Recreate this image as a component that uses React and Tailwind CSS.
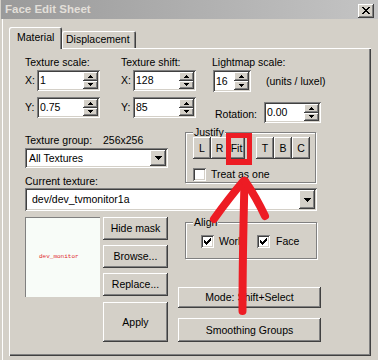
import React from "react";

const raised =
  "bg-[#d4d0c8] shadow-[inset_-1px_-1px_#404040,inset_1px_1px_#ffffff,inset_-2px_-2px_#808080]";
const sunken =
  "bg-white shadow-[inset_1px_1px_#808080,inset_-1px_-1px_#ffffff,inset_2px_2px_#404040,inset_-2px_-2px_#d4d0c8]";
const etched =
  "border border-[#808080] shadow-[inset_1px_1px_#ffffff,1px_1px_#ffffff]";

// tiny pixel triangles used on spin and combo buttons
function SpinArrow({ down }) {
  return (
    <svg width="5" height="3" viewBox="0 0 5 3" shapeRendering="crispEdges">
      {down ? (
        <path d="M0 0h5v1h-5z M1 1h3v1h-3z M2 2h1v1h-1z" fill="#000" />
      ) : (
        <path d="M2 0h1v1h-1z M1 1h3v1h-3z M0 2h5v1h-5z" fill="#000" />
      )}
    </svg>
  );
}

function ComboArrow() {
  return (
    <svg width="7" height="4" viewBox="0 0 7 4" shapeRendering="crispEdges">
      <path d="M0 0h7v1h-7z M1 1h5v1h-5z M2 2h3v1h-3z M3 3h1v1h-1z" fill="#000" />
    </svg>
  );
}

function Spin({ value, className }) {
  return (
    <div className={`flex p-[2px] ${sunken} ${className}`}>
      <div className="flex flex-1 items-center pl-[1px]">{value}</div>
      <div className="flex w-[15px] flex-col">
        <div className={`flex flex-1 items-center justify-center ${raised}`}>
          <SpinArrow />
        </div>
        <div className={`flex flex-1 items-center justify-center ${raised}`}>
          <SpinArrow down />
        </div>
      </div>
    </div>
  );
}

function Combo({ text, className, textClass = "pl-[2px]" }) {
  return (
    <div className={`flex p-[2px] ${sunken} ${className}`}>
      <div className={`flex flex-1 items-center ${textClass}`}>{text}</div>
      <div className={`flex w-[16px] items-center justify-center ${raised}`}>
        <ComboArrow />
      </div>
    </div>
  );
}

function Btn({ children, className }) {
  return (
    <div className={`flex items-center justify-center ${raised} ${className}`}>
      {children}
    </div>
  );
}

function Check({ checked }) {
  return (
    <div className={`flex h-[13px] w-[13px] shrink-0 items-center justify-center ${sunken}`}>
      {checked && (
        <svg width="7" height="7" viewBox="0 0 7 7" shapeRendering="crispEdges">
          <path
            d="M0 2h1v3h-1z M1 3h1v3h-1z M2 4h1v3h-1z M3 3h1v3h-1z M4 2h1v3h-1z M5 1h1v3h-1z M6 0h1v3h-1z"
            fill="#000"
          />
        </svg>
      )}
    </div>
  );
}

export default function App() {
  return (
    <div className="relative h-[360px] w-[378px] overflow-hidden bg-[#d4d0c8] font-['Liberation_Sans',Arial,sans-serif] text-[10.5px] leading-[13px] text-black">
      {/* Title bar */}
      <div className="ml-[1px] flex h-[19px] items-center justify-between bg-gradient-to-r from-[#9a9a9a] to-[#c4c4c4] pr-[4px]">
        <span className="pl-[4px] text-[11.5px] font-bold text-[#e2dfd9]">Face Edit Sheet</span>
        <div className={`mt-[2px] flex h-[14px] w-[16px] items-center justify-center ${raised}`}>
          <svg width="8" height="7" viewBox="0 0 8 7" shapeRendering="crispEdges">
            <path
              d="M0 0h2v1h-2z M6 0h2v1h-2z M1 1h2v1h-2z M5 1h2v1h-2z M2 2h4v1h-4z M3 3h2v1h-2z M2 4h4v1h-4z M1 5h2v1h-2z M5 5h2v1h-2z M0 6h2v1h-2z M6 6h2v1h-2z"
              fill="#000"
            />
          </svg>
        </div>
      </div>

      <div className="ml-[2px] h-[341px] border-l border-white pl-[6px] pt-[8px]">
        {/* Tabs */}
        <div className="flex h-[21px] items-end">
          <div className="relative z-10 mb-[-1px] h-[22px] w-[53px] rounded-t-[2px] bg-[#d4d0c8] pl-[8px] pt-[4px] shadow-[inset_1px_1px_#ffffff,inset_-1px_0_#404040,inset_-2px_0_#808080]">
            Material
          </div>
          <div className="h-[17px] w-[74px] rounded-t-[2px] pl-[4px] pt-[2px] shadow-[inset_1px_1px_#ffffff,inset_-1px_0_#404040,inset_-2px_0_#808080]">
            Displacement
          </div>
        </div>

        {/* Panel */}
        <div className="h-[308px] w-[362px] pl-[16px] pt-[8px] shadow-[inset_1px_1px_#ffffff,inset_-1px_-1px_#404040,inset_-2px_-2px_#808080]">
          {/* Scale / shift / lightmap */}
          <div className="flex">
            <div className="w-[96px]">
              <div className="h-[14px]">Texture scale:</div>
              <div className="flex items-center">
                <span className="w-[12px]">X:</span>
                <Spin value="1" className="h-[21px] w-[63px]" />
              </div>
              <div className="mt-[6px] flex items-center">
                <span className="w-[12px]">Y:</span>
                <Spin value="0.75" className="h-[21px] w-[63px]" />
              </div>
            </div>
            <div className="w-[91px]">
              <div className="h-[14px]">Texture shift:</div>
              <div className="flex items-center">
                <span className="w-[12px]">X:</span>
                <Spin value="128" className="h-[21px] w-[63px]" />
              </div>
              <div className="mt-[6px] flex items-center">
                <span className="w-[12px]">Y:</span>
                <Spin value="85" className="h-[21px] w-[63px]" />
              </div>
            </div>
            <div>
              <div className="h-[14px]">Lightmap scale:</div>
              <div className="flex items-center">
                <Spin value="16" className="ml-[1px] h-[22px] w-[38px]" />
                <span className="ml-[15px]">(units / luxel)</span>
              </div>
              <div className="mt-[10px] flex items-center">
                <span className="ml-[3px] w-[49px] pt-[3px]">Rotation:</span>
                <Spin value="0.00" className="h-[21px] w-[57px]" />
              </div>
            </div>
          </div>

          {/* Texture group / justify */}
          <div className="mt-[3px] flex items-start">
            <div className="w-[143px]">
              <div className="pt-[8px]">
                <span className="inline-block w-[78px]">Texture group:</span>
                <span>256x256</span>
              </div>
              <Combo text="All Textures" className="mt-[1px] h-[20px] w-[143px]" />
              <div className="mt-[7px]">Current texture:</div>
            </div>
            <fieldset className={`ml-[17px] w-[131px] pb-[1px] pl-[7px] ${etched}`}>
              <legend className="bg-[#d4d0c8] px-[1px] leading-[13px]">Justify</legend>
              <div className="mt-[-2px] flex">
                <Btn className="h-[22px] w-[18px]">L</Btn>
                <Btn className="h-[22px] w-[17px]">R</Btn>
                <Btn className="h-[22px] w-[17px]">Fit</Btn>
                <Btn className="ml-[11px] h-[22px] w-[18px]">T</Btn>
                <Btn className="h-[22px] w-[18px]">B</Btn>
                <Btn className="h-[22px] w-[18px]">C</Btn>
              </div>
              <div className="mt-[9px] flex items-center">
                <Check />
                <span className="ml-[5px]">Treat as one</span>
              </div>
            </fieldset>
          </div>

          <Combo
            text="dev/dev_tvmonitor1a"
            className="h-[23px] w-[292px]"
            textClass="pl-[5px]"
          />

          {/* Preview, buttons, align */}
          <div className="mt-[6px] flex items-start">
            <div className="h-[80px] w-[75px] bg-[#f8fcf8] pl-[14px] pt-[31px] shadow-[inset_1px_1px_#808080]">
              <span className="font-['Liberation_Mono',monospace] text-[6px] leading-[6px] text-[#e0282c]">
                dev_monitor
              </span>
            </div>
            <div className="ml-[3px] flex w-[65px] flex-col">
              <Btn className="h-[23px]">Hide mask</Btn>
              <Btn className="mt-[5px] h-[23px]">Browse...</Btn>
              <Btn className="mt-[5px] h-[23px]">Replace...</Btn>
              <Btn className="mt-[6px] h-[40px]">Apply</Btn>
            </div>
            <div className="ml-[10px] flex w-[143px] flex-col">
              <fieldset className={`mt-[-1px] ml-[7px] w-[132px] pb-[10px] pl-[7px] ${etched}`}>
                <legend className="bg-[#d4d0c8] px-[1px] leading-[13px]">Align</legend>
                <div className="mt-[6px] flex items-center">
                  <div className="ml-[8px] flex w-[56px] items-center">
                    <Check checked />
                    <span className="ml-[5px]">World</span>
                  </div>
                  <Check checked />
                  <span className="ml-[6px]">Face</span>
                </div>
              </fieldset>
              <Btn className="mt-[28px] h-[21px]">Mode: Shift+Select</Btn>
              <Btn className="mt-[10px] h-[24px]">Smoothing Groups</Btn>
            </div>
          </div>
        </div>
      </div>

      {/* red annotation drawn over the dialog */}
      <div className="absolute left-[226px] top-[133px] h-[32px] w-[26px] border-[5px] border-b-[6px] border-[#ed1c24]" />
      <svg
        className="pointer-events-none absolute left-0 top-0"
        width="378"
        height="360"
        viewBox="0 0 378 360"
      >
        <g fill="none" stroke="#ed1c24" strokeWidth="8" strokeLinecap="round" strokeLinejoin="round">
          <path d="M244.5 181 C243.5 220 242.5 270 242.5 311" />
          <path d="M243.5 181 Q229 198 214 219" />
          <path d="M245 181 Q256 197 265 216" />
        </g>
      </svg>
    </div>
  );
}
